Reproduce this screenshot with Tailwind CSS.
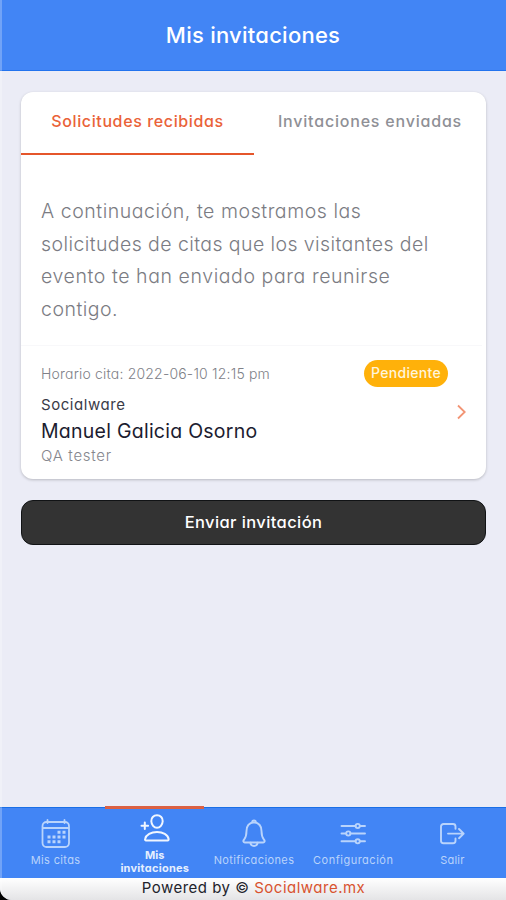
<!DOCTYPE html>
<html lang="es">
<head>
<meta charset="utf-8">
<meta name="viewport" content="width=device-width, initial-scale=1">
<title>Mis invitaciones</title>
<script src="https://cdn.jsdelivr.net/npm/@tailwindcss/browser@4"></script>
</head>
<body class="bg-black font-['Inter','Liberation_Sans',sans-serif] [font-feature-settings:'cv11']">
<div class="relative flex h-[900px] w-[506px] flex-col overflow-hidden rounded-bl-[12px] bg-[#ebecf6]">
  <header class="flex h-[71px] shrink-0 items-center justify-center border-b border-[#2273ee] bg-[#4285f5] text-[22px] font-medium tracking-[0.25px] text-white"><h1>Mis invitaciones</h1></header>

  <main class="flex-1 pr-[20px] pl-[21px] pt-[21px]">
    <section class="h-[387px] rounded-[12px] bg-white shadow-[0_1px_3px_rgba(0,0,0,0.22)]">
      <nav class="flex h-[63px] text-[16px] font-medium leading-6">
        <div class="flex w-[233px] justify-center border-b-2 border-[#e5562b] pt-[17px] tracking-[0.62px] text-[#ea6238]">Solicitudes recibidas</div>
        <div class="flex flex-1 justify-center pt-[17px] tracking-[0.8px] text-[#8f9096]">Invitaciones enviadas</div>
      </nav>
      <div class="h-[190px] whitespace-nowrap px-[20px] pt-[40px] text-[19.5px] font-light leading-[32.5px] text-[#7b7c83]">
        <p class="tracking-[0.55px]">A continuación, te mostramos las</p>
        <p class="tracking-[0.42px]">solicitudes de citas que los visitantes del</p>
        <p class="tracking-[0.58px]">evento te han enviado para reunirse</p>
        <p class="tracking-[0.5px]">contigo.</p>
      </div>
      <article class="mr-[4px] flex items-center border-t border-[#f8f8fa] pt-[13px] pl-[20px]">
        <div class="w-[407px] whitespace-nowrap">
          <div class="flex h-[28px] items-center justify-between">
            <span class="text-[14px] font-light tracking-[0.19px] text-[#808188]">Horario cita: 2022-06-10 12:15 pm</span>
            <span class="flex h-[27px] w-[84px] items-center justify-center rounded-full bg-[#ffb10a] pb-px text-[14px] font-medium tracking-[0.3px] text-[#fff5dc]">Pendiente</span>
          </div>
          <p class="mt-[8px] text-[15px] leading-[20px] tracking-[0.55px] text-[#3a3b48]">Socialware</p>
          <p class="mt-[2px] text-[19.5px] leading-[28px] tracking-[0.25px] text-[#1c1c30]">Manuel Galicia Osorno</p>
          <p class="text-[15px] font-light leading-[22px] tracking-[0.7px] text-[#85868d]">QA tester</p>
        </div>
        <svg class="-mt-[3px] ml-[8px] h-[16px] w-[12px]" viewBox="0 0 12 16" fill="none" stroke="#f29474" stroke-width="1.8"><path d="M2 1.5 8.7 8 2 14.5"/></svg>
      </article>
    </section>
    <button class="mt-[21px] flex h-[45px] w-full items-center justify-center rounded-[12px] border border-[#111315] bg-[#333333] text-[16.5px] font-medium tracking-[0.4px] text-white">Enviar invitación</button>
  </main>

  <nav class="flex h-[71px] shrink-0 border-t border-[#1a6fe6] bg-[#4285f5] pr-[4px] pl-[6px] text-center text-[11px] leading-[13px] text-[#b9d3fb]">
    <div class="flex flex-1 flex-col items-center pt-[11px]">
      <svg class="h-[30px] w-[30px]" viewBox="0 0 30 30" fill="none" stroke="#b9d4fc" stroke-width="1.8"><rect x="1.5" y="3" width="26.500" height="25" rx="4"/><path d="M2 9h26"/><path d="M6.500 1v3M23.500 1v3" stroke-linecap="round"/><path d="M16.500 13.300h3M21.500 13.300h3M6.500 18h3M11.500 18h3M16.500 18h3M21.500 18h3M6.500 22.700h3M11.500 22.700h3M16.500 22.700h3" stroke-width="3"/></svg>
      <span class="mt-[5px] tracking-[0.35px]">Mis citas</span>
    </div>
    <div class="-mt-[2px] flex flex-1 flex-col items-center border-t-3 border-[#db6043] pt-[4px] text-[#e5effe]">
      <svg class="h-[30px] w-[30px]" viewBox="0 0 30 30" fill="none" stroke="#f0f6ff" stroke-width="2" stroke-linecap="round"><path d="M17 2.300c3.500 0 5.900 2.500 5.700 5.900-.2 3.600-2.600 6.500-5.700 6.500s-5.500-2.900-5.700-6.500c-.2-3.400 2.200-5.900 5.700-5.900Z"/><path d="M6 27.400c-.8 0-1.100-.7-.9-1.400 1-4.200 5.900-7 11.900-7s10.900 2.800 11.600 7c.1.800-.1 1.400-1 1.400Z"/><path d="M4.800 9.500v6.600M1.500 12.800h6.600"/></svg>
      <span class="mt-[6px] font-bold">Mis</span>
      <span class="font-bold tracking-[0.25px]">invitaciones</span>
    </div>
    <div class="flex flex-1 flex-col items-center pt-[11px]">
      <svg class="h-[30px] w-[30px]" viewBox="0 0 30 30" fill="none" stroke="#b9d4fc" stroke-width="1.900" stroke-linejoin="round" stroke-linecap="round"><path d="M15 3.200c-5 .6-7.500 4.200-7.500 8.800 0 6-1.400 7.300-2.700 9-.9 1-.3 2.500 1 2.500h18.400c1.300 0 1.900-1.500 1-2.500-1.300-1.700-2.700-3-2.700-9 0-4.600-2.500-8.200-7.500-8.800Z"/><path d="M13.200 3c0-2.200 3.600-2.200 3.600 0M11.400 23.800c.3 4.200 6.900 4.200 7.200 0"/></svg>
      <span class="mt-[5px] tracking-[0.4px]">Notificaciones</span>
    </div>
    <div class="flex flex-1 flex-col items-center pt-[11px]">
      <svg class="h-[30px] w-[30px]" viewBox="0 0 30 30" fill="none" stroke="#b9d4fc" stroke-width="1.900" stroke-linecap="round"><path d="M3.500 7h14M22 7h5M3.500 14.500h4.500M12.500 14.500h14.500M3.500 22.300h14M22 22.300h5"/><circle cx="19.700" cy="7" r="2.100"/><circle cx="10.300" cy="14.500" r="2.100"/><circle cx="19.700" cy="22.300" r="2.100"/></svg>
      <span class="mt-[5px] tracking-[0.5px]">Configuración</span>
    </div>
    <div class="flex flex-1 flex-col items-center pt-[11px]">
      <svg class="h-[30px] w-[30px]" viewBox="0 0 30 30" fill="none" stroke="#b9d4fc" stroke-width="1.900" stroke-linecap="round" stroke-linejoin="round"><path d="M18.500 9.700V7.500a2.500 2.500 0 0 0-2.500-2.500H6.500A2.500 2.500 0 0 0 4 7.500v14.200A2.500 2.500 0 0 0 6.500 24.200H16a2.500 2.500 0 0 0 2.500-2.500v-2.200"/><path d="M11 14.600h15.500M22 10l4.700 4.600-4.700 4.600"/></svg>
      <span class="mt-[5px] tracking-[0.2px]">Salir</span>
    </div>
  </nav>

  <footer class="flex h-[22px] shrink-0 justify-center bg-linear-to-b from-white to-[#e4e4e6] pl-px text-[15px] leading-[20px] tracking-[0.5px] text-[#22232b]"><p>Powered by © <span class="text-[#d9532f]">Socialware.mx</span></p></footer>
  <div class="absolute inset-y-0 left-0 w-[2px] bg-white/25"></div>
</div>
</body>
</html>
